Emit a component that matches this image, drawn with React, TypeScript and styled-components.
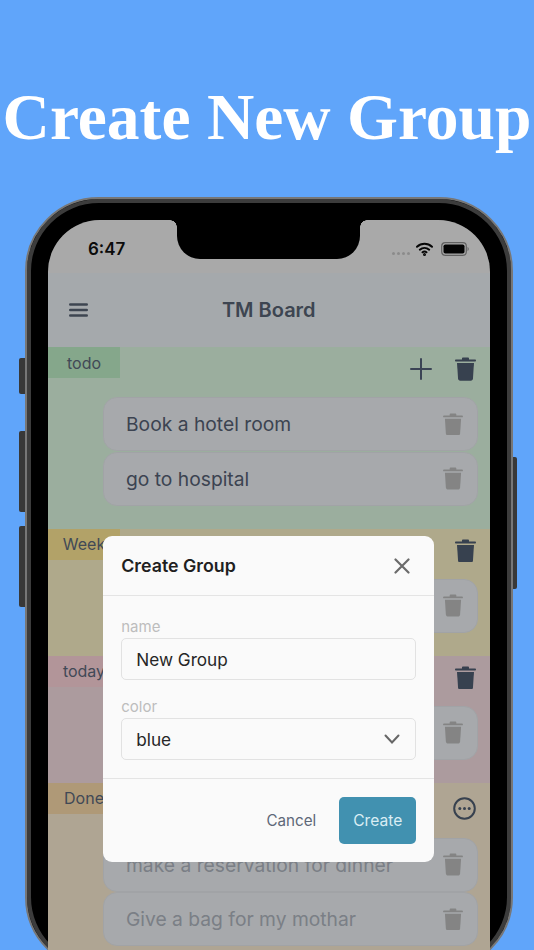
import React from "react";
import styled, { createGlobalStyle } from "styled-components";

const GlobalStyle = createGlobalStyle`
  html, body {
    margin: 0;
    padding: 0;
    background: #60a5fa;
  }
  * {
    box-sizing: border-box;
  }
`;

const Page = styled.div`
  width: 534px;
  height: 950px;
  overflow: hidden;
  background: #60a5fa;
  font-family: Inter, "Noto Sans", sans-serif;
`;

const Hero = styled.h1`
  margin: 0;
  height: 197px;
  padding-top: 78px;
  text-align: center;
  white-space: nowrap;
  font-family: "Liberation Serif", serif;
  font-size: 65.5px;
  line-height: 78px;
  font-weight: 700;
  color: #ffffff;
`;

const Phone = styled.div`
  position: relative;
  width: 488px;
  margin-left: 25px;
  padding: 21px 21.5px 0 21px;
  background: #000;
  border: 2px solid #777;
  border-radius: 74px;
  box-shadow: inset 0 0 0 4px #3c3c3c;
`;

const SideButton = styled.span<{ $top: number; $height: number; $right?: boolean }>`
  position: absolute;
  top: ${(p) => p.$top}px;
  height: ${(p) => p.$height}px;
  width: ${(p) => (p.$right ? 4 : 6)}px;
  ${(p) => (p.$right ? "right: -6px;" : "left: -8px;")}
  background: #383838;
  border-radius: ${(p) => (p.$right ? "0 2px 2px 0" : "2px 0 0 2px")};
`;

const Screen = styled.div`
  position: relative;
  border-radius: 52px 52px 0 0;
  overflow: hidden;
  color: #4f5d71;
`;

const Notch = styled.div`
  position: absolute;
  z-index: 3;
  top: 0;
  left: 129px;
  width: 183px;
  height: 39px;
  background: #000;
  border-radius: 0 0 23px 23px;
  &::before,
  &::after {
    content: "";
    position: absolute;
    top: 0;
    width: 7px;
    height: 7px;
  }
  &::before {
    left: -7px;
    background: radial-gradient(circle at 0 100%, transparent 6.5px, #000 7px);
  }
  &::after {
    right: -7px;
    background: radial-gradient(circle at 100% 100%, transparent 6.5px, #000 7px);
  }
`;

const StatusBar = styled.div`
  display: flex;
  align-items: center;
  height: 53px;
  padding: 5px 20.5px 0 40px;
  background: #f3f3f3;
`;

const Clock = styled.span`
  flex: 1;
  font-size: 17px;
  font-weight: 600;
  color: #111;
`;

const SignalDots = styled.div`
  display: flex;
  gap: 1.5px;
  margin: 9px -2px 0 0;
`;

const Dot = styled.span`
  width: 3.5px;
  height: 3.5px;
  border-radius: 50%;
  background: #c8c8c8;
`;

const StatusIcons = styled.div`
  display: flex;
  align-items: center;
  gap: 8px;
`;

const TopBar = styled.header`
  display: grid;
  grid-template-columns: 1fr auto 1fr;
  align-items: center;
  height: 74px;
  padding: 0 21px;
  background: #edf3f7;
`;

const TopTitle = styled.div`
  font-size: 20px;
  font-weight: 600;
  color: #586474;
`;

const Group = styled.section<{ $color: string }>`
  padding: 0 12px 23px 0;
  background: ${(p) => p.$color};
`;

const GroupHead = styled.div<{ $tall?: boolean }>`
  display: flex;
  align-items: flex-start;
  justify-content: space-between;
  height: ${(p) => (p.$tall ? 55 : 50)}px;
`;

const Tag = styled.div<{ $color: string }>`
  display: flex;
  align-items: center;
  justify-content: center;
  width: 72px;
  height: 31px;
  font-size: 16px;
  white-space: nowrap;
  color: #5d697c;
  background: ${(p) => p.$color};
`;

const Actions = styled.div<{ $tall?: boolean }>`
  display: flex;
  align-items: center;
  gap: 23px;
  padding: ${(p) => (p.$tall ? "14px 2px 0 0" : "10px 2px 0 0")};
`;

const TaskList = styled.div`
  display: flex;
  flex-direction: column;
  gap: 0.5px;
  margin-left: 55px;
`;

const Task = styled.div<{ $done?: boolean }>`
  display: flex;
  align-items: center;
  justify-content: space-between;
  height: 54px;
  padding: 0 14px 0 22px;
  background: #eff3f7;
  border: 1.5px solid #e7eaee;
  border-radius: 14px;
  font-size: 19.25px;
  color: ${(p) => (p.$done ? "#b0b6c0" : "#566175")};
`;

const Dim = styled.div`
  position: absolute;
  z-index: 2;
  inset: 0;
  display: flex;
  justify-content: center;
  padding-top: 316px;
  background: rgba(0, 0, 0, 0.3);
`;

const Modal = styled.div`
  width: 331px;
  height: 326px;
  background: #fafafa;
  border-radius: 9px;
`;

const ModalHead = styled.div`
  display: flex;
  align-items: center;
  justify-content: space-between;
  height: 60px;
  padding: 0 24px 0 18px;
  border-bottom: 1.5px solid #e4e4e4;
`;

const ModalTitle = styled.div`
  font-size: 17.8px;
  font-weight: 600;
  color: #1f1f1f;
`;

const ModalBody = styled.div`
  height: 183px;
  padding: 21px 18px 0;
  border-bottom: 1.5px solid #e4e4e4;
`;

const Label = styled.div`
  height: 21px;
  font-size: 15px;
  line-height: 20px;
  color: #bdbdbd;
`;

const Field = styled.div`
  display: flex;
  align-items: center;
  justify-content: space-between;
  height: 42px;
  margin-bottom: 17px;
  padding: 0 15px 0 14px;
  border: 1.5px solid #e2e2e2;
  border-radius: 5px;
  font-size: 17.2px;
  color: #262626;
`;

const ModalFoot = styled.div`
  display: flex;
  align-items: center;
  justify-content: flex-end;
  gap: 23px;
  padding: 18px 18px 0;
`;

const CancelText = styled.span`
  font-size: 15.2px;
  color: #5e6878;
`;

const CreateButton = styled.div`
  display: flex;
  align-items: center;
  justify-content: center;
  width: 77px;
  height: 47px;
  font-size: 15.6px;
  color: #d9edf4;
  background: #4191b0;
  border-radius: 5px;
`;

const TrashIcon = ({ size, color }: { size: number; color: string }) => (
  <svg width={size} height={size * 1.14} viewBox="0 0 21 24" fill={color}>
    <path d="M7 1.6c0-.6.5-1 1-1h5c.5 0 1 .4 1 1v1h6c.6 0 1 .4 1 1s-.4 1-1 1H1c-.6 0-1-.4-1-1s.4-1 1-1h6z" />
    <path d="M2 6h17l-1 15.6c-.1 1.3-1 2.2-2.2 2.2H5.2C4 23.8 3.100 22.900 3 21.600z" />
  </svg>
);

const PlusIcon = () => (
  <svg width="22" height="22" viewBox="0 0 22 22" stroke="#55627a" strokeWidth="2" strokeLinecap="round">
    <path d="M11 1v20M1 11h20" />
  </svg>
);

const MoreIcon = () => (
  <svg width="23" height="23" viewBox="0 0 23 23" fill="none">
    <circle cx="11.500" cy="11.500" r="10.300" stroke="#4f5d71" strokeWidth="2" />
    <circle cx="6.800" cy="11.500" r="1.500" fill="#4f5d71" />
    <circle cx="11.500" cy="11.500" r="1.500" fill="#4f5d71" />
    <circle cx="16.200" cy="11.500" r="1.500" fill="#4f5d71" />
  </svg>
);

const MenuIcon = () => (
  <svg width="19" height="14" viewBox="0 0 19 14" stroke="#586474" strokeWidth="2.400" strokeLinecap="round">
    <path d="M1.200 1.500h16.600M1.200 7h16.600M1.200 12.500h16.600" />
  </svg>
);

const CloseIcon = () => (
  <svg width="16" height="16" viewBox="0 0 16 16" stroke="#6b6b6b" strokeWidth="2.200" strokeLinecap="round">
    <path d="M1.500 1.500l13 13M14.500 1.500l-13 13" />
  </svg>
);

const ChevronIcon = () => (
  <svg width="16" height="10" viewBox="0 0 16 10" fill="none" stroke="#666" strokeWidth="2" strokeLinecap="round">
    <path d="M1.500 1.500L8 8.500l6.500-7" />
  </svg>
);

const WifiIcon = () => (
  <svg width="17" height="14" viewBox="0 0 17 14" fill="none" stroke="#0a0a0a" strokeWidth="2" strokeLinecap="round">
    <path d="M1 4.800c4.300-4 10.700-4 15 0" />
    <path d="M3.800 7.700c2.700-2.400 6.700-2.400 9.400 0" />
    <path d="M6.500 10.300c1.200-.9 2.800-.9 4 0" />
    <circle cx="8.500" cy="12.500" r="0.500" fill="#0a0a0a" />
  </svg>
);

const BatteryIcon = () => (
  <svg width="28" height="14" viewBox="0 0 28 14">
    <rect x="0.700" y="0.700" width="24.600" height="12.600" rx="3.500" fill="none" stroke="#8c8c8c" strokeWidth="1.200" />
    <rect x="2.500" y="2.500" width="21" height="9" rx="1.800" fill="#050505" />
    <path d="M26.500 5v4c.8-.3 1.300-1.100 1.300-2s-.5-1.700-1.300-2z" fill="#9a9a9a" />
  </svg>
);

const darkTrash = "#4f5d71";
const lightTrash = "#bebebe";

type GroupData = {
  name: string;
  color: string;
  tagColor: string;
  tasks: { title: string; done?: boolean }[];
  tall?: boolean;
  canAdd?: boolean;
};

const groups: GroupData[] = [
  {
    name: "todo",
    color: "#dff9e2",
    tagColor: "#bfefc7",
    canAdd: true,
    tasks: [{ title: "Book a hotel room" }, { title: "go to hospital" }],
  },
  { name: "Week", color: "#fbf3c8", tagColor: "#ffe996", tasks: [{ title: "" }] },
  { name: "today", color: "#f6dfe3", tagColor: "#ffd6dc", tasks: [{ title: "" }] },
  {
    name: "Done",
    color: "#fbecd3",
    tagColor: "#fbdcab",
    tall: true,
    tasks: [
      { title: "make a reservation for dinner", done: true },
      { title: "Give a bag for my mothar", done: true },
    ],
  },
];

export default function App() {
  return (
    <Page>
      <GlobalStyle />
      <Hero>Create New Group</Hero>
      <Phone>
        <SideButton $top={159} $height={36} />
        <SideButton $top={232} $height={81} />
        <SideButton $top={327} $height={81} />
        <SideButton $right $top={258} $height={132} />
        <Screen>
          <Notch />
          <StatusBar>
            <Clock>6:47</Clock>
            <StatusIcons>
              <SignalDots>
                <Dot />
                <Dot />
                <Dot />
                <Dot />
              </SignalDots>
              <WifiIcon />
              <BatteryIcon />
            </StatusIcons>
          </StatusBar>
          <TopBar>
            <MenuIcon />
            <TopTitle>TM Board</TopTitle>
          </TopBar>
          {groups.map((group) => (
            <Group key={group.name} $color={group.color}>
              <GroupHead $tall={group.tall}>
                <Tag $color={group.tagColor}>{group.name}</Tag>
                <Actions $tall={group.tall}>
                  {group.canAdd && <PlusIcon />}
                  {group.tall ? <MoreIcon /> : <TrashIcon size={21} color={darkTrash} />}
                </Actions>
              </GroupHead>
              <TaskList>
                {group.tasks.map((task, i) => (
                  <Task key={i} $done={task.done}>
                    <span>{task.title}</span>
                    <TrashIcon size={20} color={lightTrash} />
                  </Task>
                ))}
              </TaskList>
            </Group>
          ))}
          <Dim>
            <Modal>
              <ModalHead>
                <ModalTitle>Create Group</ModalTitle>
                <CloseIcon />
              </ModalHead>
              <ModalBody>
                <Label>name</Label>
                <Field>New Group</Field>
                <Label>color</Label>
                <Field>
                  blue
                  <ChevronIcon />
                </Field>
              </ModalBody>
              <ModalFoot>
                <CancelText>Cancel</CancelText>
                <CreateButton>Create</CreateButton>
              </ModalFoot>
            </Modal>
          </Dim>
        </Screen>
      </Phone>
    </Page>
  );
}
